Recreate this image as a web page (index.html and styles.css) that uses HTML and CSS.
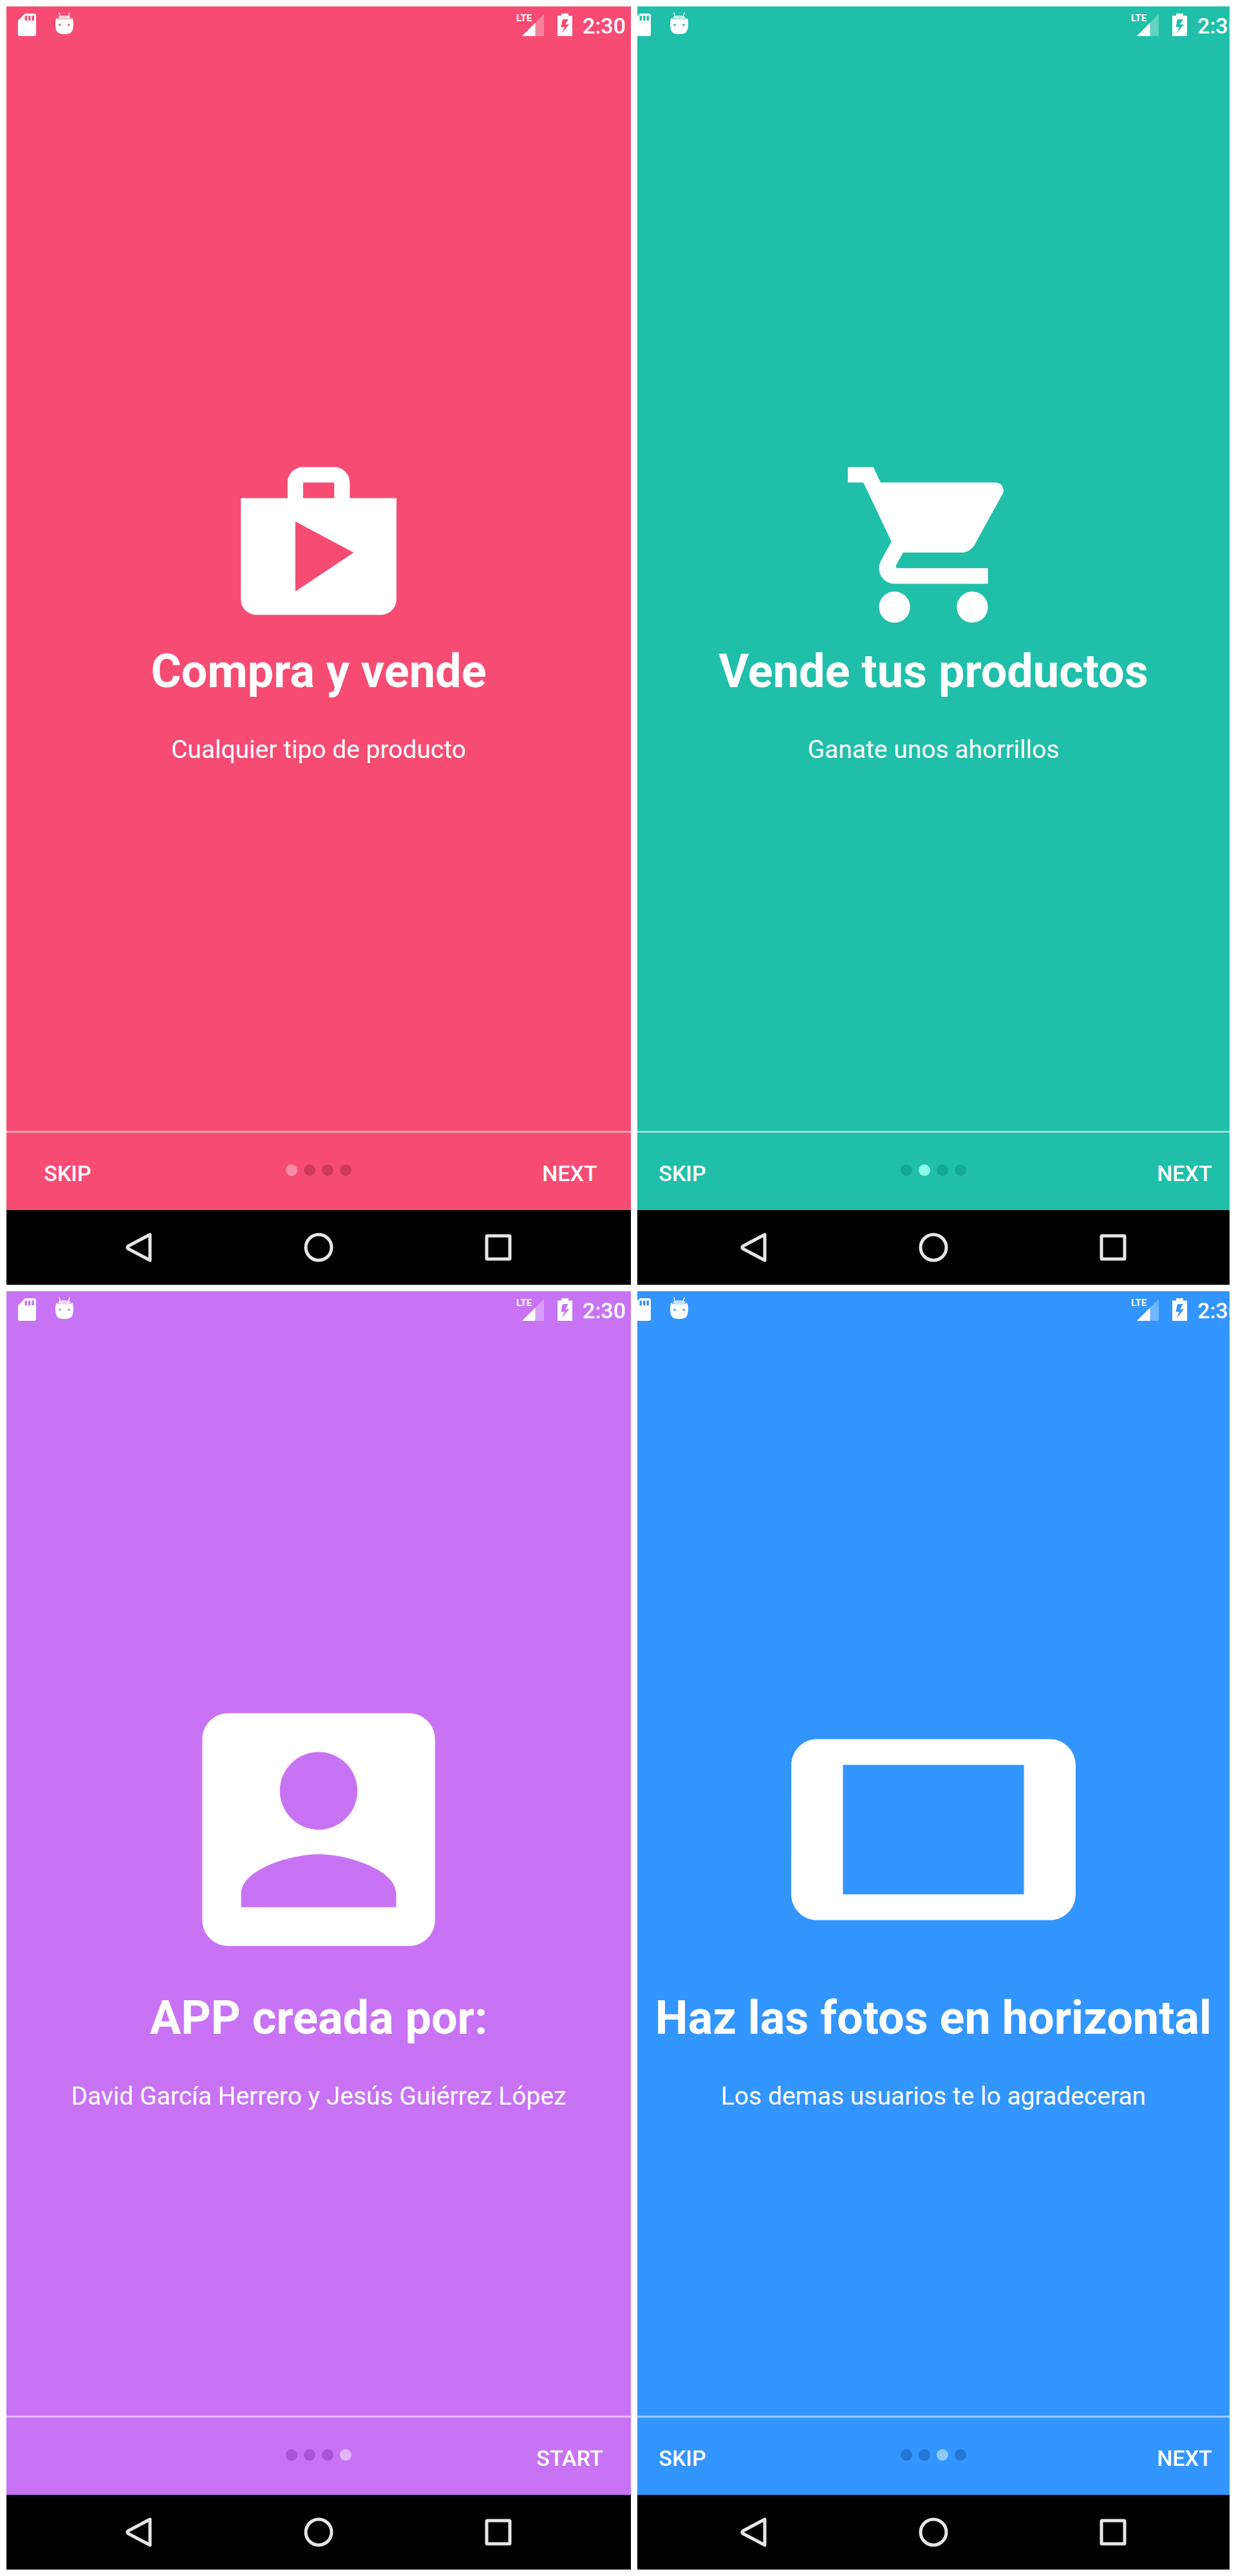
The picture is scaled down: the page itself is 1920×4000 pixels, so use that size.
FILE: index.html
```
<!DOCTYPE html>
<html lang="es">
<head>
<meta charset="utf-8">
<meta name="viewport" content="width=device-width, initial-scale=1">
<title>Compra y vende</title>
<link rel="stylesheet" href="styles.css">
</head>
<body>
<svg class="sprite" aria-hidden="true">
  <symbol id="sd" viewBox="0 0 28 35"><path fill-rule="evenodd" d="M11 0h14a3 3 0 0 1 3 3v29a3 3 0 0 1-3 3H3a3 3 0 0 1-3-3V11zM10.500 3.500v7.500h3.500V3.500zM16 3.500v7.500h3.500V3.500zM21.500 3.500v7.500H25V3.500z"/></symbol>
  <symbol id="droid" viewBox="0 0 28 39"><path d="M6 1l2 7M22 1l-2 7" stroke="currentColor" stroke-width="1.500" stroke-linecap="round"/><ellipse cx="14" cy="8.500" rx="10" ry="3.500" opacity=".7"/><path fill-rule="evenodd" d="M1.500 9C5 12.500 23 12.500 26.500 9c2 5 2 13 0 19-1.500 4-5 6-12.500 6S3 32 1.500 28c-2-6-2-14 0-19zM7 18a1.700 1.700 0 1 0 0 3.400A1.700 1.700 0 0 0 7 18zm14 0a1.700 1.700 0 1 0 0 3.400A1.700 1.700 0 0 0 21 18z"/></symbol>
  <symbol id="signal" viewBox="0 0 44 35"><path d="M43 1v34H9z" opacity=".3"/><path d="M29.500 14.500V35H9z"/></symbol>
  <symbol id="battery" viewBox="0 0 23 35"><path fill-rule="evenodd" d="M6 0h11v3.500h6V35H0V3.500h6zM8 9L5.500 21H11L6.500 31 18 17h-6l5-8z"/></symbol>
</svg>

<main class="board">
  <section class="screen screen--pink">
    <div class="phone">
      <header class="status">
        <svg class="i-sd"><use href="#sd"/></svg>
        <svg class="i-droid"><use href="#droid"/></svg>
        <div class="signal"><svg class="i-signal"><use href="#signal"/></svg><span class="lte">LTE</span></div>
        <svg class="i-battery"><use href="#battery"/></svg>
        <time class="clock">2:30</time>
      </header>
      <div class="slide">
        <svg class="art" viewBox="0 0 24 24" aria-hidden="true"><path d="M16 6V4c0-1.110-.890-2-2-2h-4c-1.110 0-2 .890-2 2v2H2v13c0 1.110.890 2 2 2h16c1.110 0 2-.890 2-2V6h-6zm-6-2h4v2h-4V4zM9 18V9l7.500 4L9 18z"/></svg>
        <div class="copy"><h2>Compra y vende</h2><p>Cualquier tipo de producto</p></div>
      </div>
      <footer class="pager">
        <button type="button" class="action">SKIP</button>
        <div class="dots"><i class="dot on"></i><i class="dot"></i><i class="dot"></i><i class="dot"></i></div>
        <button type="button" class="action">NEXT</button>
      </footer>
      <nav class="keys">
        <button type="button" aria-label="Atrás"><svg viewBox="0 0 48 48"><path d="M41 4v40L7 26q-2-2 0-4z"/></svg></button>
        <button type="button" aria-label="Inicio"><svg viewBox="0 0 48 48"><circle cx="24" cy="24" r="20"/></svg></button>
        <button type="button" aria-label="Recientes"><svg viewBox="0 0 48 48"><rect x="6" y="6" width="36" height="36" rx="1"/></svg></button>
      </nav>
    </div>
  </section>

  <section class="screen screen--teal">
    <div class="phone">
      <header class="status">
        <svg class="i-sd"><use href="#sd"/></svg>
        <svg class="i-droid"><use href="#droid"/></svg>
        <div class="signal"><svg class="i-signal"><use href="#signal"/></svg><span class="lte">LTE</span></div>
        <svg class="i-battery"><use href="#battery"/></svg>
        <time class="clock">2:30</time>
      </header>
      <div class="slide">
        <svg class="art" viewBox="0 0 24 24" aria-hidden="true"><path d="M7 18c-1.100 0-1.990.9-1.990 2S5.900 22 7 22s2-.9 2-2-.9-2-2-2zM1 2v2h2l3.600 7.590-1.350 2.450c-.16.28-.25.61-.25.96 0 1.100.9 2 2 2h12v-2H7.420c-.14 0-.25-.11-.25-.25l.03-.12.900-1.630h7.450c.75 0 1.410-.41 1.750-1.030l3.580-6.490c.08-.14.12-.31.12-.48 0-.55-.45-1-1-1H5.210l-.94-2H1zm16 16c-1.100 0-1.990.9-1.990 2s.89 2 1.990 2 2-.9 2-2-.9-2-2-2z"/></svg>
        <div class="copy"><h2>Vende tus productos</h2><p>Ganate unos ahorrillos</p></div>
      </div>
      <footer class="pager">
        <button type="button" class="action">SKIP</button>
        <div class="dots"><i class="dot"></i><i class="dot on"></i><i class="dot"></i><i class="dot"></i></div>
        <button type="button" class="action">NEXT</button>
      </footer>
      <nav class="keys">
        <button type="button" aria-label="Atrás"><svg viewBox="0 0 48 48"><path d="M41 4v40L7 26q-2-2 0-4z"/></svg></button>
        <button type="button" aria-label="Inicio"><svg viewBox="0 0 48 48"><circle cx="24" cy="24" r="20"/></svg></button>
        <button type="button" aria-label="Recientes"><svg viewBox="0 0 48 48"><rect x="6" y="6" width="36" height="36" rx="1"/></svg></button>
      </nav>
    </div>
  </section>

  <section class="screen screen--purple">
    <div class="phone">
      <header class="status">
        <svg class="i-sd"><use href="#sd"/></svg>
        <svg class="i-droid"><use href="#droid"/></svg>
        <div class="signal"><svg class="i-signal"><use href="#signal"/></svg><span class="lte">LTE</span></div>
        <svg class="i-battery"><use href="#battery"/></svg>
        <time class="clock">2:30</time>
      </header>
      <div class="slide">
        <svg class="art art--large" viewBox="0 0 24 24" aria-hidden="true"><path d="M3 5v14c0 1.100.89 2 2 2h14c1.100 0 2-.9 2-2V5c0-1.100-.9-2-2-2H5c-1.110 0-2 .9-2 2zm12 4c0 1.660-1.340 3-3 3s-3-1.340-3-3 1.340-3 3-3 3 1.340 3 3zm-9 8c0-2 4-3.100 6-3.100s6 1.100 6 3.100v1H6v-1z"/></svg>
        <div class="copy"><h2>APP creada por:</h2><p>David García Herrero y Jesús Guiérrez López</p></div>
      </div>
      <footer class="pager">
        <span></span>
        <div class="dots"><i class="dot"></i><i class="dot"></i><i class="dot"></i><i class="dot on"></i></div>
        <button type="button" class="action">START</button>
      </footer>
      <nav class="keys">
        <button type="button" aria-label="Atrás"><svg viewBox="0 0 48 48"><path d="M41 4v40L7 26q-2-2 0-4z"/></svg></button>
        <button type="button" aria-label="Inicio"><svg viewBox="0 0 48 48"><circle cx="24" cy="24" r="20"/></svg></button>
        <button type="button" aria-label="Recientes"><svg viewBox="0 0 48 48"><rect x="6" y="6" width="36" height="36" rx="1"/></svg></button>
      </nav>
    </div>
  </section>

  <section class="screen screen--blue">
    <div class="phone">
      <header class="status">
        <svg class="i-sd"><use href="#sd"/></svg>
        <svg class="i-droid"><use href="#droid"/></svg>
        <div class="signal"><svg class="i-signal"><use href="#signal"/></svg><span class="lte">LTE</span></div>
        <svg class="i-battery"><use href="#battery"/></svg>
        <time class="clock">2:30</time>
      </header>
      <div class="slide">
        <svg class="art art--large" viewBox="0 0 24 24" aria-hidden="true"><path d="M1.010 7L1 17c0 1.100.9 2 2 2h18c1.100 0 2-.9 2-2V7c0-1.100-.9-2-2-2H3c-1.100 0-1.990.9-1.990 2zM19 7v10H5V7h14z"/></svg>
        <div class="copy"><h2>Haz las fotos en horizontal</h2><p>Los demas usuarios te lo agradeceran</p></div>
      </div>
      <footer class="pager">
        <button type="button" class="action">SKIP</button>
        <div class="dots"><i class="dot"></i><i class="dot"></i><i class="dot on"></i><i class="dot"></i></div>
        <button type="button" class="action">NEXT</button>
      </footer>
      <nav class="keys">
        <button type="button" aria-label="Atrás"><svg viewBox="0 0 48 48"><path d="M41 4v40L7 26q-2-2 0-4z"/></svg></button>
        <button type="button" aria-label="Inicio"><svg viewBox="0 0 48 48"><circle cx="24" cy="24" r="20"/></svg></button>
        <button type="button" aria-label="Recientes"><svg viewBox="0 0 48 48"><rect x="6" y="6" width="36" height="36" rx="1"/></svg></button>
      </nav>
    </div>
  </section>
</main>
</body>
</html>
```

FILE: styles.css
```
* {
  box-sizing: border-box;
}

body {
  margin: 0;
  background: #fff;
  color: #fff;
  font-family: Roboto, "Liberation Sans", sans-serif;
}

button {
  padding: 0;
  border: 0;
  background: none;
  color: inherit;
  font: inherit;
  cursor: pointer;
}

.sprite {
  display: block;
  width: 0;
  height: 0;
}

/* Two by two board of phone screens; the right column is a little narrower */
.board {
  display: grid;
  grid-template-columns: minmax(0, 97fr) minmax(0, 92fr);
  grid-template-rows: 1fr 1fr;
  gap: 10px;
  min-height: 100vh;
  padding: 10px;
}

.screen {
  display: flex;
  overflow: hidden;
  background: var(--bg);
}

.screen--pink {
  --bg: #f64c73;
  --dot: #d1395c;
  --dot-on: #f98da5;
}

.screen--teal {
  --bg: #20bfaa;
  --dot: #14a895;
  --dot-on: #8cf9eb;
}

.screen--purple {
  --bg: #c873f4;
  --dot: #a854d4;
  --dot-on: #e4b5fc;
}

.screen--blue {
  --bg: #3395ff;
  --dot: #2278d4;
  --dot-on: #93c6fd;
}

.phone {
  flex: 1;
  display: flex;
  flex-direction: column;
  min-width: 0;
}

/* The right column crops both sides of its phones */
.screen--teal .phone,
.screen--blue .phone {
  margin: 0 -25px;
}

.status {
  display: flex;
  align-items: center;
  height: 65px;
  padding: 0 8px 8px 18px;
}

.status svg {
  flex: none;
  fill: currentColor;
}

.i-sd {
  width: 28px;
  height: 35px;
  margin-right: 30px;
}

.i-droid {
  width: 28px;
  height: 39px;
}

.signal {
  position: relative;
  display: flex;
  margin-left: auto;
  margin-right: 20px;
}

.i-signal {
  width: 44px;
  height: 35px;
}

.i-battery {
  width: 23px;
  height: 35px;
  margin-right: 16px;
}

.lte {
  position: absolute;
  top: 0;
  left: 0;
  font-size: 15px;
  font-weight: 700;
  line-height: 15px;
}

.clock {
  padding-top: 3px;
  font-size: 34px;
  font-weight: 500;
  line-height: 40px;
}

.slide {
  flex: 1;
  display: grid;
  grid-template-rows: 1fr auto 1fr;
  justify-items: center;
  padding-bottom: 139px;
}

.art {
  grid-row: 2;
  width: 290px;
  height: 290px;
  fill: currentColor;
}

.art--large {
  width: 482px;
  height: 482px;
}

.copy {
  grid-row: 3;
  padding-top: 10px;
  text-align: center;
}

.copy h2 {
  margin: 0 0 56px;
  font-size: 72px;
  font-weight: 700;
  line-height: 84px;
}

.copy p {
  margin: 0;
  font-size: 39px;
  line-height: 46px;
}

.pager {
  display: grid;
  grid-template-columns: 190px 1fr 190px;
  align-items: center;
  height: 123px;
  border-top: 3px solid rgba(255, 255, 255, 0.5);
}

.action {
  height: 120px;
  padding-top: 6px;
  font-size: 34px;
  font-weight: 500;
}

.dots {
  display: flex;
  justify-content: center;
  gap: 10px;
  padding-bottom: 4px;
}

.dot {
  width: 18px;
  height: 18px;
  border-radius: 50%;
  background: var(--dot);
}

.dot.on {
  background: var(--dot-on);
}

.keys {
  display: flex;
  height: 116px;
  padding: 0 67px;
  background: #000;
}

.keys button {
  flex: 1;
  display: flex;
  align-items: center;
  justify-content: center;
}

.keys svg {
  width: 48px;
  height: 48px;
  fill: none;
  stroke: #e6e6e6;
  stroke-width: 5;
  stroke-linejoin: round;
}
```
